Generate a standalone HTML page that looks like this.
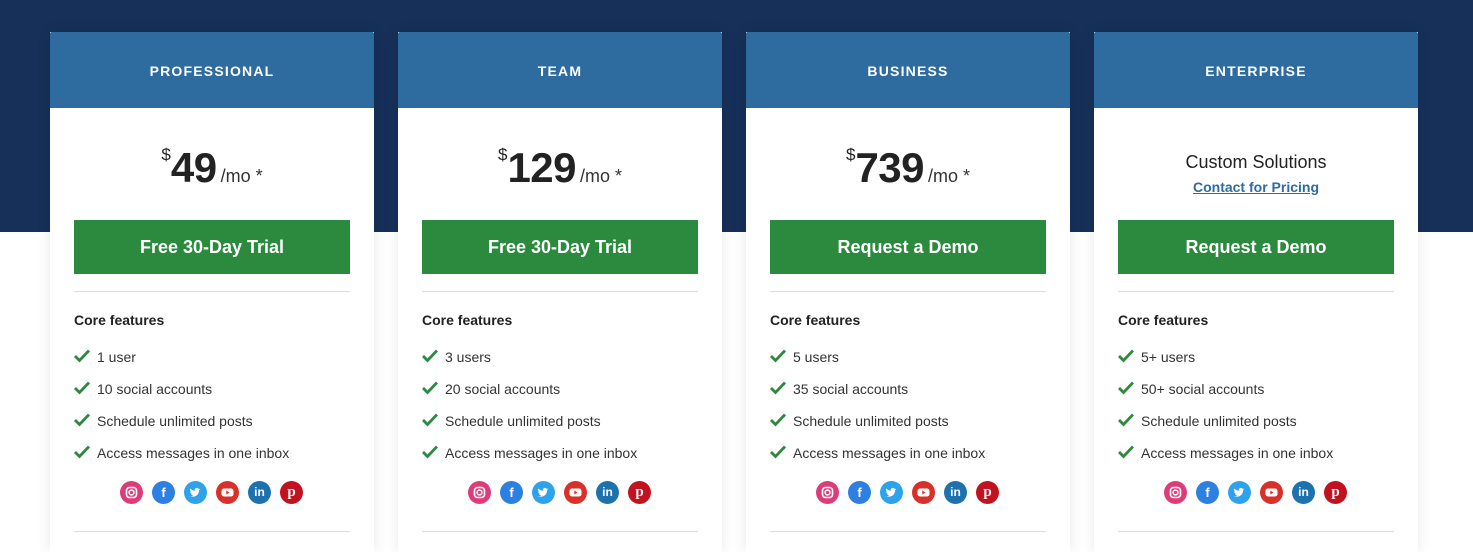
<!DOCTYPE html>
<html><head><meta charset="utf-8"><style>
*{box-sizing:border-box;margin:0;padding:0}
body{width:1473px;height:534px;overflow:hidden;background:#fff;font-family:"Liberation Sans",sans-serif;position:relative;color:#222}
.top{position:absolute;left:0;top:0;width:1473px;height:232px;background:#163059}
.card{position:absolute;top:32px;width:324px;height:520px;background:#fff;box-shadow:0 0 14px rgba(0,0,0,.09)}
.hd{height:76px;background:#2e6b9e;color:#fff;font-weight:bold;font-size:14px;letter-spacing:1.2px;text-align:center;line-height:78px;border-radius:2px 2px 0 0}
.price{position:absolute;top:112px;left:0;width:100%;text-align:center;white-space:nowrap}
.price .d{font-size:17px;vertical-align:22px}
.price .n{font-size:42px;font-weight:bold;letter-spacing:-.5px}
.price .m{font-size:18px;color:#333;margin-left:4px}
.cs{position:absolute;top:120px;width:100%;text-align:center;font-size:18px;color:#222}
.cp{position:absolute;top:147px;width:100%;text-align:center;font-size:14px;font-weight:bold;color:#2e6b9e;text-decoration:underline}
.btn{position:absolute;left:24px;top:188px;width:276px;height:54px;background:#2b8a3e;color:#fff;font-weight:bold;font-size:18px;text-align:center;line-height:54px}
.hr{position:absolute;left:24px;width:276px;height:1px;background:#ddd}
.cf{position:absolute;left:24px;top:280px;font-size:14px;font-weight:bold;color:#222}
.li{position:absolute;left:24px;font-size:14px;color:#333}
.li svg{position:absolute;left:0;top:0}
.li span{position:absolute;left:23px;top:0;white-space:nowrap}
.ic{position:absolute;top:449px;width:23px;height:23px;border-radius:50%;color:#fff;font-size:13px;font-weight:bold;text-align:center;line-height:23px}
</style></head><body>
<div class="top"></div>

<div class="card" style="left:50px">
<div class="hd">PROFESSIONAL</div>
<div class="price"><span class="d">$</span><span class="n">49</span><span class="m">/mo *</span></div>
<div class="btn">Free 30-Day Trial</div>
<div class="hr" style="top:259px"></div>
<div class="cf">Core features</div>
<div class="li" style="top:317px"><svg width="16" height="14" viewBox="0 0 16 14"><path d="M1 7l4.5 4.5L15 1.5" stroke="#2b8a3e" stroke-width="2.8" fill="none"/></svg><span>1 user</span></div>
<div class="li" style="top:349px"><svg width="16" height="14" viewBox="0 0 16 14"><path d="M1 7l4.5 4.5L15 1.5" stroke="#2b8a3e" stroke-width="2.8" fill="none"/></svg><span>10 social accounts</span></div>
<div class="li" style="top:381px"><svg width="16" height="14" viewBox="0 0 16 14"><path d="M1 7l4.5 4.5L15 1.5" stroke="#2b8a3e" stroke-width="2.8" fill="none"/></svg><span>Schedule unlimited posts</span></div>
<div class="li" style="top:413px"><svg width="16" height="14" viewBox="0 0 16 14"><path d="M1 7l4.5 4.5L15 1.5" stroke="#2b8a3e" stroke-width="2.8" fill="none"/></svg><span>Access messages in one inbox</span></div>
<div class="ic" style="left:70px;background:#dc3d7a"><svg width="23" height="23"><rect x="6.5" y="6.5" width="10" height="10" rx="3" stroke="#fff" stroke-width="1.6" fill="none"/><circle cx="11.5" cy="11.5" r="2.4" stroke="#fff" stroke-width="1.5" fill="none"/></svg></div>
<div class="ic" style="left:102px;background:#2d7fe0">f</div>
<div class="ic" style="left:134px;background:#2ea3ec"><svg width="23" height="23"><path d="M6 15c3 1.5 7 .5 8.5-3 .5-1 .6-2 .6-3l1.4-1.3-1.7.3c-.7-1.4-2.8-1.5-3.7-.2-.4.6-.5 1.3-.3 1.9-2-.1-3.6-1-4.6-2.3-.6 1.3 0 2.7 1 3.3l-1.1-.2c.1 1.2 1 2 2 2.3l-1 .1c.4.9 1.2 1.4 2 1.5-1 .7-2.3 1-4 .6z" fill="#fff"/></svg></div>
<div class="ic" style="left:166px;background:#d8312a"><svg width="23" height="23"><rect x="5.5" y="7.5" width="12" height="8" rx="2.5" fill="#fff"/><path d="M10.3 9.5v4l3.2-2z" fill="#d8312a"/></svg></div>
<div class="ic" style="left:198px;background:#1d72ad;font-size:12px">in</div>
<div class="ic" style="left:230px;background:#c1131f;font-family:'Liberation Serif',serif;font-size:15px">p</div>
<div class="hr" style="top:499px"></div>
</div>

<div class="card" style="left:398px">
<div class="hd">TEAM</div>
<div class="price"><span class="d">$</span><span class="n">129</span><span class="m">/mo *</span></div>
<div class="btn">Free 30-Day Trial</div>
<div class="hr" style="top:259px"></div>
<div class="cf">Core features</div>
<div class="li" style="top:317px"><svg width="16" height="14" viewBox="0 0 16 14"><path d="M1 7l4.5 4.5L15 1.5" stroke="#2b8a3e" stroke-width="2.8" fill="none"/></svg><span>3 users</span></div>
<div class="li" style="top:349px"><svg width="16" height="14" viewBox="0 0 16 14"><path d="M1 7l4.5 4.5L15 1.5" stroke="#2b8a3e" stroke-width="2.8" fill="none"/></svg><span>20 social accounts</span></div>
<div class="li" style="top:381px"><svg width="16" height="14" viewBox="0 0 16 14"><path d="M1 7l4.5 4.5L15 1.5" stroke="#2b8a3e" stroke-width="2.8" fill="none"/></svg><span>Schedule unlimited posts</span></div>
<div class="li" style="top:413px"><svg width="16" height="14" viewBox="0 0 16 14"><path d="M1 7l4.5 4.5L15 1.5" stroke="#2b8a3e" stroke-width="2.8" fill="none"/></svg><span>Access messages in one inbox</span></div>
<div class="ic" style="left:70px;background:#dc3d7a"><svg width="23" height="23"><rect x="6.5" y="6.5" width="10" height="10" rx="3" stroke="#fff" stroke-width="1.6" fill="none"/><circle cx="11.5" cy="11.5" r="2.4" stroke="#fff" stroke-width="1.5" fill="none"/></svg></div>
<div class="ic" style="left:102px;background:#2d7fe0">f</div>
<div class="ic" style="left:134px;background:#2ea3ec"><svg width="23" height="23"><path d="M6 15c3 1.5 7 .5 8.5-3 .5-1 .6-2 .6-3l1.4-1.3-1.7.3c-.7-1.4-2.8-1.5-3.7-.2-.4.6-.5 1.3-.3 1.9-2-.1-3.6-1-4.6-2.3-.6 1.3 0 2.7 1 3.3l-1.1-.2c.1 1.2 1 2 2 2.3l-1 .1c.4.9 1.2 1.4 2 1.5-1 .7-2.3 1-4 .6z" fill="#fff"/></svg></div>
<div class="ic" style="left:166px;background:#d8312a"><svg width="23" height="23"><rect x="5.5" y="7.5" width="12" height="8" rx="2.5" fill="#fff"/><path d="M10.3 9.5v4l3.2-2z" fill="#d8312a"/></svg></div>
<div class="ic" style="left:198px;background:#1d72ad;font-size:12px">in</div>
<div class="ic" style="left:230px;background:#c1131f;font-family:'Liberation Serif',serif;font-size:15px">p</div>
<div class="hr" style="top:499px"></div>
</div>

<div class="card" style="left:746px">
<div class="hd">BUSINESS</div>
<div class="price"><span class="d">$</span><span class="n">739</span><span class="m">/mo *</span></div>
<div class="btn">Request a Demo</div>
<div class="hr" style="top:259px"></div>
<div class="cf">Core features</div>
<div class="li" style="top:317px"><svg width="16" height="14" viewBox="0 0 16 14"><path d="M1 7l4.5 4.5L15 1.5" stroke="#2b8a3e" stroke-width="2.8" fill="none"/></svg><span>5 users</span></div>
<div class="li" style="top:349px"><svg width="16" height="14" viewBox="0 0 16 14"><path d="M1 7l4.5 4.5L15 1.5" stroke="#2b8a3e" stroke-width="2.8" fill="none"/></svg><span>35 social accounts</span></div>
<div class="li" style="top:381px"><svg width="16" height="14" viewBox="0 0 16 14"><path d="M1 7l4.5 4.5L15 1.5" stroke="#2b8a3e" stroke-width="2.8" fill="none"/></svg><span>Schedule unlimited posts</span></div>
<div class="li" style="top:413px"><svg width="16" height="14" viewBox="0 0 16 14"><path d="M1 7l4.5 4.5L15 1.5" stroke="#2b8a3e" stroke-width="2.8" fill="none"/></svg><span>Access messages in one inbox</span></div>
<div class="ic" style="left:70px;background:#dc3d7a"><svg width="23" height="23"><rect x="6.5" y="6.5" width="10" height="10" rx="3" stroke="#fff" stroke-width="1.6" fill="none"/><circle cx="11.5" cy="11.5" r="2.4" stroke="#fff" stroke-width="1.5" fill="none"/></svg></div>
<div class="ic" style="left:102px;background:#2d7fe0">f</div>
<div class="ic" style="left:134px;background:#2ea3ec"><svg width="23" height="23"><path d="M6 15c3 1.5 7 .5 8.5-3 .5-1 .6-2 .6-3l1.4-1.3-1.7.3c-.7-1.4-2.8-1.5-3.7-.2-.4.6-.5 1.3-.3 1.9-2-.1-3.6-1-4.6-2.3-.6 1.3 0 2.7 1 3.3l-1.1-.2c.1 1.2 1 2 2 2.3l-1 .1c.4.9 1.2 1.4 2 1.5-1 .7-2.3 1-4 .6z" fill="#fff"/></svg></div>
<div class="ic" style="left:166px;background:#d8312a"><svg width="23" height="23"><rect x="5.5" y="7.5" width="12" height="8" rx="2.5" fill="#fff"/><path d="M10.3 9.5v4l3.2-2z" fill="#d8312a"/></svg></div>
<div class="ic" style="left:198px;background:#1d72ad;font-size:12px">in</div>
<div class="ic" style="left:230px;background:#c1131f;font-family:'Liberation Serif',serif;font-size:15px">p</div>
<div class="hr" style="top:499px"></div>
</div>

<div class="card" style="left:1094px">
<div class="hd">ENTERPRISE</div>
<div class="cs">Custom Solutions</div>
<div class="cp">Contact for Pricing</div>
<div class="btn">Request a Demo</div>
<div class="hr" style="top:259px"></div>
<div class="cf">Core features</div>
<div class="li" style="top:317px"><svg width="16" height="14" viewBox="0 0 16 14"><path d="M1 7l4.5 4.5L15 1.5" stroke="#2b8a3e" stroke-width="2.8" fill="none"/></svg><span>5+ users</span></div>
<div class="li" style="top:349px"><svg width="16" height="14" viewBox="0 0 16 14"><path d="M1 7l4.5 4.5L15 1.5" stroke="#2b8a3e" stroke-width="2.8" fill="none"/></svg><span>50+ social accounts</span></div>
<div class="li" style="top:381px"><svg width="16" height="14" viewBox="0 0 16 14"><path d="M1 7l4.5 4.5L15 1.5" stroke="#2b8a3e" stroke-width="2.8" fill="none"/></svg><span>Schedule unlimited posts</span></div>
<div class="li" style="top:413px"><svg width="16" height="14" viewBox="0 0 16 14"><path d="M1 7l4.5 4.5L15 1.5" stroke="#2b8a3e" stroke-width="2.8" fill="none"/></svg><span>Access messages in one inbox</span></div>
<div class="ic" style="left:70px;background:#dc3d7a"><svg width="23" height="23"><rect x="6.5" y="6.5" width="10" height="10" rx="3" stroke="#fff" stroke-width="1.6" fill="none"/><circle cx="11.5" cy="11.5" r="2.4" stroke="#fff" stroke-width="1.5" fill="none"/></svg></div>
<div class="ic" style="left:102px;background:#2d7fe0">f</div>
<div class="ic" style="left:134px;background:#2ea3ec"><svg width="23" height="23"><path d="M6 15c3 1.5 7 .5 8.5-3 .5-1 .6-2 .6-3l1.4-1.3-1.7.3c-.7-1.4-2.8-1.5-3.7-.2-.4.6-.5 1.3-.3 1.9-2-.1-3.6-1-4.6-2.3-.6 1.3 0 2.7 1 3.3l-1.1-.2c.1 1.2 1 2 2 2.3l-1 .1c.4.9 1.2 1.4 2 1.5-1 .7-2.3 1-4 .6z" fill="#fff"/></svg></div>
<div class="ic" style="left:166px;background:#d8312a"><svg width="23" height="23"><rect x="5.5" y="7.5" width="12" height="8" rx="2.5" fill="#fff"/><path d="M10.3 9.5v4l3.2-2z" fill="#d8312a"/></svg></div>
<div class="ic" style="left:198px;background:#1d72ad;font-size:12px">in</div>
<div class="ic" style="left:230px;background:#c1131f;font-family:'Liberation Serif',serif;font-size:15px">p</div>
<div class="hr" style="top:499px"></div>
</div>
</body></html>
